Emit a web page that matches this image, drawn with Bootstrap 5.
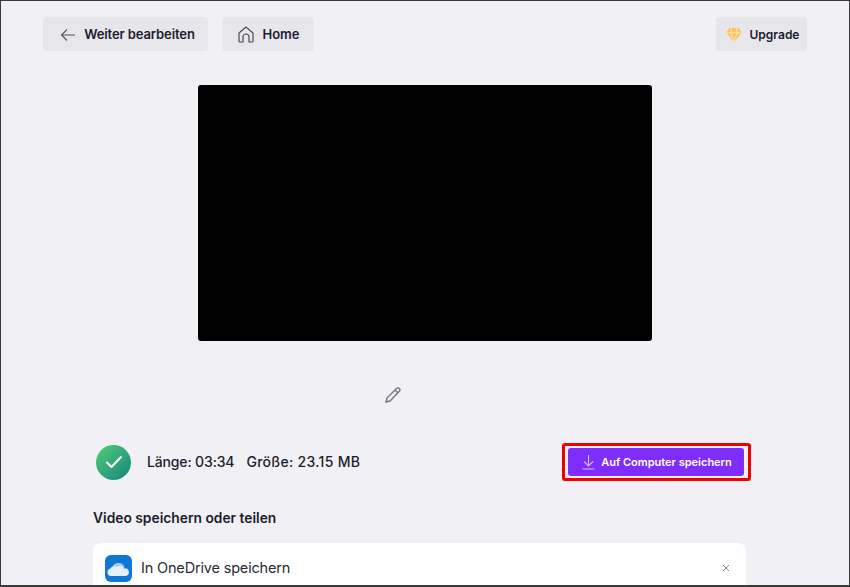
<!DOCTYPE html>
<html lang="de">
<head>
    <meta charset="UTF-8">
    <title>Video speichern</title>
    <link href="https://cdn.jsdelivr.net/npm/bootstrap@5.3.2/dist/css/bootstrap.min.css" rel="stylesheet">
    <style>
        html, body { height: 100%; overflow: hidden; }
        body { background: #f0f0f5; font-family: Inter, "Noto Sans", sans-serif; color: #1c1c2e; }
        .frame { height: 587px; border: 1px solid #3a3a3a; border-width: 1px 1px 2px 1px; overflow: hidden; }
        .top-bar { padding: 16px 41px 0 42px; }
        .tool-btn { height: 34px; background: #e6e6eb; border: 0; border-radius: 4px; font-size: 13px; font-weight: 600; color: #1c1c30; padding: 1px 0 0; }
        .btn-back { width: 165px; letter-spacing: -.1px; padding-left: 4px; }
        .btn-home { width: 92px; margin-left: 14px; padding-left: 2px; }
        .btn-up { width: 91px; font-size: 12px; margin-right: 1px; padding-left: 2px; }
        .video-box { width: 454px; height: 256px; background: #000; border-radius: 3px; margin: 34px 0 0 197px; }
        .edit-row { margin: 45px 0 0 383px; height: 19px; }
        .info-row { margin: 38px 0 0 95px; width: 655px; height: 38px; }
        .check-dot { width: 35px; height: 35px; border-radius: 50%; background: linear-gradient(135deg, #50cf78, #16837c); }
        .info-text { font-size: 14px; font-weight: 500; margin: 0 0 2px 16px; color: #1d1d2b; }
        .info-len { letter-spacing: -.15px; }
        .info-size { margin-left: 12px; letter-spacing: .3px; }
        .red-box { width: 189px; height: 38px; border: 3px solid #f00000; border-radius: 3px; padding: 2px 4px 2px 3px; }
        .save-btn { width: 100%; height: 28px; background: #7f2cff; color: #fff; border: 0; border-radius: 3px; font-size: 11px; font-weight: 600; padding: 1px 0 0 2px; gap: 6px; }
        .share-title { margin: 29px 0 0 92px; font-size: 13.8px; font-weight: 600; color: #1d1d2b; line-height: 16px; }
        .share-card { margin: 17px 0 0 92px; width: 653px; height: 60px; background: #fff; border-radius: 8px 8px 0 0; padding: 12px 12px 0 12px; }
        .drive-icon { width: 27px; height: 27px; border-radius: 6px; background: #0f78d4; }
        .share-name { font-size: 14.5px; letter-spacing: -.17px; margin: 2px 0 0 9px; color: #2a2a38; }
        .close-mark { margin-top: 9px; }
    </style>
</head>
<body>
<div class="frame">
    <div class="top-bar d-flex">
        <button class="tool-btn btn-back d-flex align-items-center justify-content-center gap-2">
            <svg width="16" height="14" viewBox="0 0 16 14" fill="none" stroke="#55555f" stroke-width="1.1"><path d="M15 7H1.500M7 1.500 1.500 7 7 12.500"/></svg>
            Weiter bearbeiten
        </button>
        <button class="tool-btn btn-home d-flex align-items-center justify-content-center gap-2">
            <svg width="16" height="17" viewBox="0 0 16 17" fill="none" stroke="#4a4a55" stroke-width="1.2"><path d="M1 7 8 1l7 6v8a1 1 0 0 1-1 1h-3v-5a2.500 2.500 0 0 0-6 0v5H2a1 1 0 0 1-1-1z"/></svg>
            Home
        </button>
        <button class="tool-btn btn-up d-flex align-items-center justify-content-center gap-2 ms-auto">
            <svg width="16" height="14" viewBox="0 0 15 13"><path fill="#ffc35c" d="M3.500 0h8L15 4.200 7.500 13 0 4.200z"/><path fill="none" stroke="#f3ead8" stroke-width=".8" d="M0 4.500h15M5.200 0 4.500 4.500l3 8 3-8L9.800 0"/></svg>
            Upgrade
        </button>
    </div>

    <div class="video-box"></div>

    <div class="edit-row">
        <svg class="d-block" width="18" height="18" viewBox="0 0 18 18" fill="none" stroke="#74748a" stroke-width="1.4"><path d="M2 16l1-4L12.500 2.500a1.800 1.800 0 0 1 2.800 2.800L6 15z"/><path d="M11 4l3 3"/></svg>
    </div>

    <div class="info-row d-flex align-items-center">
        <div class="check-dot d-flex align-items-center justify-content-center">
            <svg width="18" height="14" viewBox="0 0 18 14" fill="none" stroke="#fff" stroke-width="2" stroke-linecap="round" stroke-linejoin="round"><path d="M2 7.500 6.500 12 16 2"/></svg>
        </div>
        <div class="info-text"><span class="info-len">Länge: 03:34</span><span class="info-size">Größe: 23.15 MB</span></div>
        <div class="red-box ms-auto">
            <button class="save-btn d-flex align-items-center justify-content-center">
                <svg width="13" height="15" viewBox="0 0 13 15" fill="none" stroke="#d9bdff" stroke-width="1.1"><path d="M6.500 0v10.500M2 6.500l4.500 4.500L11 6.500M0.500 14h12"/></svg>
                Auf Computer speichern
            </button>
        </div>
    </div>

    <div class="share-title">Video speichern oder teilen</div>

    <div class="share-card d-flex">
        <div class="drive-icon d-flex align-items-center justify-content-center flex-shrink-0">
            <svg width="23" height="15" viewBox="0 0 23 15"><path fill="#a9cdee" d="M5 8a6.500 6.500 0 0 1 12.500-2L16 10H6z"/><path fill="#e6f0fa" d="M4 15a3.800 3.800 0 0 1-.5-7.500 4 4 0 0 1 6-1.500 5 5 0 0 1 7.500 1.500 3.800 3.800 0 0 1 2 7.500z"/></svg>
        </div>
        <div class="share-name">In OneDrive speichern</div>
        <svg class="close-mark ms-auto me-1" width="8" height="8" viewBox="0 0 8 8" fill="none" stroke="#85858f" stroke-width="1"><path d="M1 1l6 6M7 1 1 7"/></svg>
    </div>
</div>
<script src="https://cdn.jsdelivr.net/npm/bootstrap@5.3.2/dist/js/bootstrap.bundle.min.js"></script>
</body>
</html>
